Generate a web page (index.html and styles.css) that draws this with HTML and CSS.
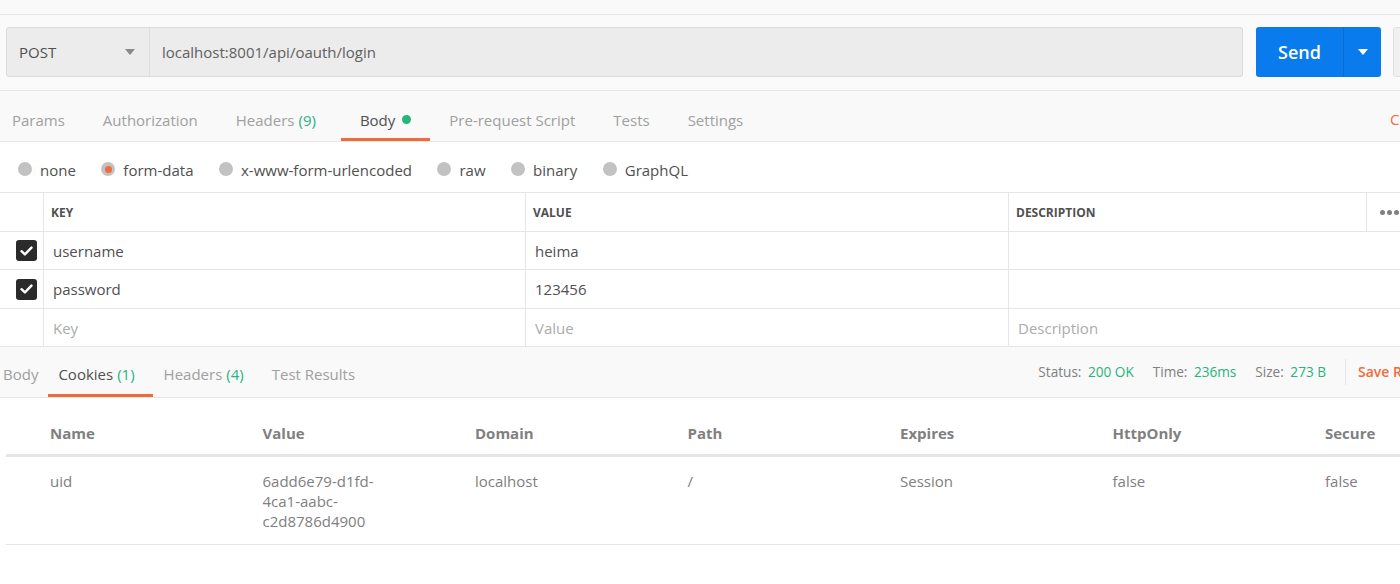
FILE: index.html
```html
<!DOCTYPE html>
<html>
<head>
<meta charset="utf-8">
<link rel="stylesheet" href="styles.css">
</head>
<body>
<div class="app">
  <div class="topstrip"></div>
  <div class="urlrow">
    <div class="method">
      <span class="method-label">POST</span>
      <svg class="caret" width="10" height="6" viewBox="0 0 10 6"><path d="M0 0h10L5 6z" fill="#8a8a8a"/></svg>
    </div>
    <div class="url">localhost:8001/api/oauth/login</div>
    <div class="send">
      <span class="send-label">Send</span>
      <span class="send-drop"><svg width="10" height="6" viewBox="0 0 10 6"><path d="M0 0h10L5 6z" fill="#fff"/></svg></span>
    </div>
    <div class="save"></div>
  </div>

  <div class="reqtabs">
    <div class="tabs">
      <span class="tab">Params</span>
      <span class="tab">Authorization</span>
      <span class="tab">Headers <span class="count">(9)</span></span>
      <span class="tab active">Body <span class="dot"></span></span>
      <span class="tab">Pre-request Script</span>
      <span class="tab">Tests</span>
      <span class="tab">Settings</span>
    </div>
    <span class="cookies-link">Cookies</span>
  </div>

  <div class="radios">
    <span class="radio"><span class="rb"></span>none</span>
    <span class="radio"><span class="rb on"></span>form-data</span>
    <span class="radio"><span class="rb"></span>x-www-form-urlencoded</span>
    <span class="radio"><span class="rb"></span>raw</span>
    <span class="radio"><span class="rb"></span>binary</span>
    <span class="radio"><span class="rb"></span>GraphQL</span>
  </div>

  <div class="kv">
    <div class="kv-row kv-head">
      <div class="c0"></div>
      <div class="c1">KEY</div>
      <div class="c2">VALUE</div>
      <div class="c3">DESCRIPTION</div>
      <div class="c4"><span class="more"><i></i><i></i><i></i></span></div>
    </div>
    <div class="kv-row r38">
      <div class="c0"><span class="cb"><svg width="13" height="10" viewBox="0 0 13 10"><path d="M1.5 5.2l3.4 3.2L11.5 1.6" stroke="#fff" stroke-width="2.4" fill="none" stroke-linecap="round" stroke-linejoin="round"/></svg></span></div>
      <div class="c1">username</div>
      <div class="c2">heima</div>
      <div class="c3"></div>
      <div class="c4"></div>
    </div>
    <div class="kv-row">
      <div class="c0"><span class="cb"><svg width="13" height="10" viewBox="0 0 13 10"><path d="M1.5 5.2l3.4 3.2L11.5 1.6" stroke="#fff" stroke-width="2.4" fill="none" stroke-linecap="round" stroke-linejoin="round"/></svg></span></div>
      <div class="c1">password</div>
      <div class="c2">123456</div>
      <div class="c3"></div>
      <div class="c4"></div>
    </div>
    <div class="kv-row r38 ph">
      <div class="c0"></div>
      <div class="c1">Key</div>
      <div class="c2">Value</div>
      <div class="c3">Description</div>
      <div class="c4"></div>
    </div>
  </div>

  <div class="restabs">
    <div class="tabs2">
      <span class="tab2 first">Body</span>
      <span class="tab2 active">Cookies <span class="count">(1)</span></span>
      <span class="tab2">Headers <span class="count">(4)</span></span>
      <span class="tab2">Test Results</span>
    </div>
    <div class="meta">
      <span class="mi">Status: <b>200 OK</b></span>
      <span class="mi">Time: <b>236ms</b></span>
      <span class="mi">Size: <b>273 B</b></span>
      <span class="sep"></span>
      <span class="saveresp">Save Response</span>
    </div>
  </div>

  <div class="cookies">
    <div class="ck-row ck-head">
      <div class="ck">Name</div>
      <div class="ck">Value</div>
      <div class="ck">Domain</div>
      <div class="ck">Path</div>
      <div class="ck">Expires</div>
      <div class="ck">HttpOnly</div>
      <div class="ck">Secure</div>
    </div>
    <div class="ck-row ck-body">
      <div class="ck">uid</div>
      <div class="ck">6add6e79-d1fd-<wbr>4ca1-aabc-<wbr>c2d8786d4900</div>
      <div class="ck">localhost</div>
      <div class="ck">/</div>
      <div class="ck">Session</div>
      <div class="ck">false</div>
      <div class="ck">false</div>
    </div>
  </div>
</div>
</body>
</html>
```

FILE: styles.css
```css
* { box-sizing: border-box; }
html, body { margin: 0; padding: 0; }
body {
  font-family: "Open Sans", "Liberation Sans", sans-serif;
  font-size: 14px;
  color: #505050;
  background: #fff;
  width: 1400px;
  height: 584px;
  overflow: hidden;
}
.app { width: 1400px; overflow: hidden; }

.topstrip {
  height: 15px;
  background: #f9f9f9;
  border-bottom: 1px solid #e6e6e6;
}
.urlrow {
  display: flex;
  align-items: stretch;
  height: 76px;
  padding: 12px 0 13px 6px;
  background: #fafafa;
  border-bottom: 1px solid #e6e6e6;
}
.method {
  width: 144px;
  flex: none;
  display: flex;
  align-items: center;
  justify-content: space-between;
  padding: 0 14px 0 12px;
  background: #ececec;
  border: 1px solid #dcdcdc;
  border-radius: 3px 0 0 3px;
  font-size: 15px;
  color: #505050;
}
.url {
  width: 1093px;
  flex: none;
  display: flex;
  align-items: center;
  padding-left: 12px;
  background: #ececec;
  border: 1px solid #dcdcdc;
  border-left: none;
  border-radius: 0 3px 3px 0;
  font-size: 15px;
  color: #606060;
}
.send {
  margin-left: 13px;
  width: 125px;
  flex: none;
  display: flex;
  background: #097bed;
  border-radius: 3px;
  color: #fff;
}
.send-label {
  flex: 1;
  display: flex;
  align-items: center;
  justify-content: center;
  font-weight: 600;
  font-size: 18px;
}
.send-drop {
  width: 38px;
  display: flex;
  align-items: center;
  justify-content: center;
  border-left: 1px solid #0a6cd0;
}
.save {
  margin-left: 12px;
  width: 40px;
  flex: none;
  background: #f0f0f0;
  border: 1px solid #e0e0e0;
  border-radius: 3px;
}

.reqtabs {
  height: 51px;
  background: #f9f9f9;
  border-bottom: 1px solid #e6e6e6;
  display: flex;
  justify-content: space-between;
}
.tabs { display: flex; margin-left: -7px; }
.tab {
  display: flex;
  align-items: center;
  padding: 10px 19px 0;
  font-size: 15px;
  color: #a0a0a0;
  border-bottom: 3px solid transparent;
  white-space: nowrap;
}
.tab.active { color: #505050; border-bottom-color: #f26b3a; margin-left: 6px; }
.count { color: #26b47f; margin-left: 4px; }
.dot {
  display: inline-block;
  width: 9px; height: 9px;
  border-radius: 50%;
  background: #26b47f;
  margin-left: 7px;
}
.cookies-link {
  color: #f26b3a;
  font-size: 15px;
  display: flex;
  align-items: center;
  padding-top: 6px;
  width: 60px;
  flex: none;
  margin-right: -50px;
  white-space: nowrap;
}

.radios {
  height: 51px;
  display: flex;
  align-items: center;
  padding: 6px 0 0 18px;
  border-bottom: 1px solid #e6e6e6;
  font-size: 15px;
  color: #505050;
}
.radio { display: flex; align-items: center; margin-right: 25.5px; white-space: nowrap; }
.rb {
  width: 14px; height: 14px;
  border-radius: 50%;
  background: #c2c2c2;
  margin-right: 8px;
  display: inline-flex;
  align-items: center;
  justify-content: center;
  margin-top: -2px;
}
.rb.on::after {
  content: "";
  width: 7px; height: 7px;
  border-radius: 50%;
  background: #f26b3a;
}

.kv-row {
  display: flex;
  height: 39px;
  border-bottom: 1px solid #e6e6e6;
  font-size: 15px;
  color: #505050;
}
.kv-row.r38 { height: 38px; }
.kv-row > div { display: flex; align-items: center; }
.c0 { width: 44px; border-right: 1px solid #e6e6e6; justify-content: center; padding-left: 10px; }
.c1 { width: 482px; border-right: 1px solid #e6e6e6; padding-left: 9px; }
.c2 { width: 483px; border-right: 1px solid #e6e6e6; padding-left: 9px; }
.c3 { width: 358px; padding-left: 9px; }
.c4 { flex: 1; padding-left: 13px; }
.kv-head > div { font-size: 12px; font-weight: 700; color: #505050; padding-top: 1px; }
.kv-head .c1, .kv-head .c2, .kv-head .c3 { padding-left: 7px; }
.kv-head .c3 { border-right: 1px solid #e6e6e6; }
.ph { color: #ababab; }
.more { display: flex; gap: 2px; }
.more i { width: 5px; height: 5px; border-radius: 50%; background: #808080; display: block; }
.cb {
  width: 21px; height: 21px;
  background: #2a2a2a;
  border-radius: 3px;
  display: flex;
  align-items: center;
  justify-content: center;
}

.restabs {
  height: 51px;
  background: #f9f9f9;
  border-bottom: 1px solid #e6e6e6;
  display: flex;
  justify-content: space-between;
}
.tabs2 { display: flex; margin-left: -7px; }
.tab2 {
  display: flex;
  align-items: center;
  padding: 6px 18px 0 10px;
  font-size: 15px;
  color: #a0a0a0;
  border-bottom: 3px solid transparent;
  white-space: nowrap;
}
.tab2.first { margin-right: -8px; }
.tab2.active { color: #505050; border-bottom-color: #f26b3a; }
.tab2:nth-child(3) { padding-left: 11px; }
.meta {
  display: flex;
  align-items: center;
  font-size: 13.6px;
  color: #808080;
  margin-right: -69px;
  padding-bottom: 1px;
  white-space: nowrap;
}
.mi { margin-left: 19px; }
.mi:first-child { margin-left: 0; }
.mi b { font-weight: 400; color: #26b47f; margin-left: 3px; }
.sep { width: 1px; height: 26px; background: #e6e6e6; margin: 0 12px 0 19px; }
.saveresp { color: #f26b3a; font-weight: 600; font-size: 14px; width: 111px; }

.cookies { margin-left: 6px; }
.ck-row { display: flex; }
.ck {
  width: 212.5px;
  flex: none;
  padding-left: 44px;
  padding-right: 44px;
}
.ck-head {
  height: 59px;
  align-items: center;
  border-bottom: 3px solid #e6e6e6;
  font-weight: 700;
  font-size: 15px;
  color: #808080;
  padding-top: 13px;
}
.ck-body {
  padding: 14px 0 13px;
  border-bottom: 1px solid #e6e6e6;
  font-size: 15px;
  color: #808080;
  line-height: 20px;
}
```
